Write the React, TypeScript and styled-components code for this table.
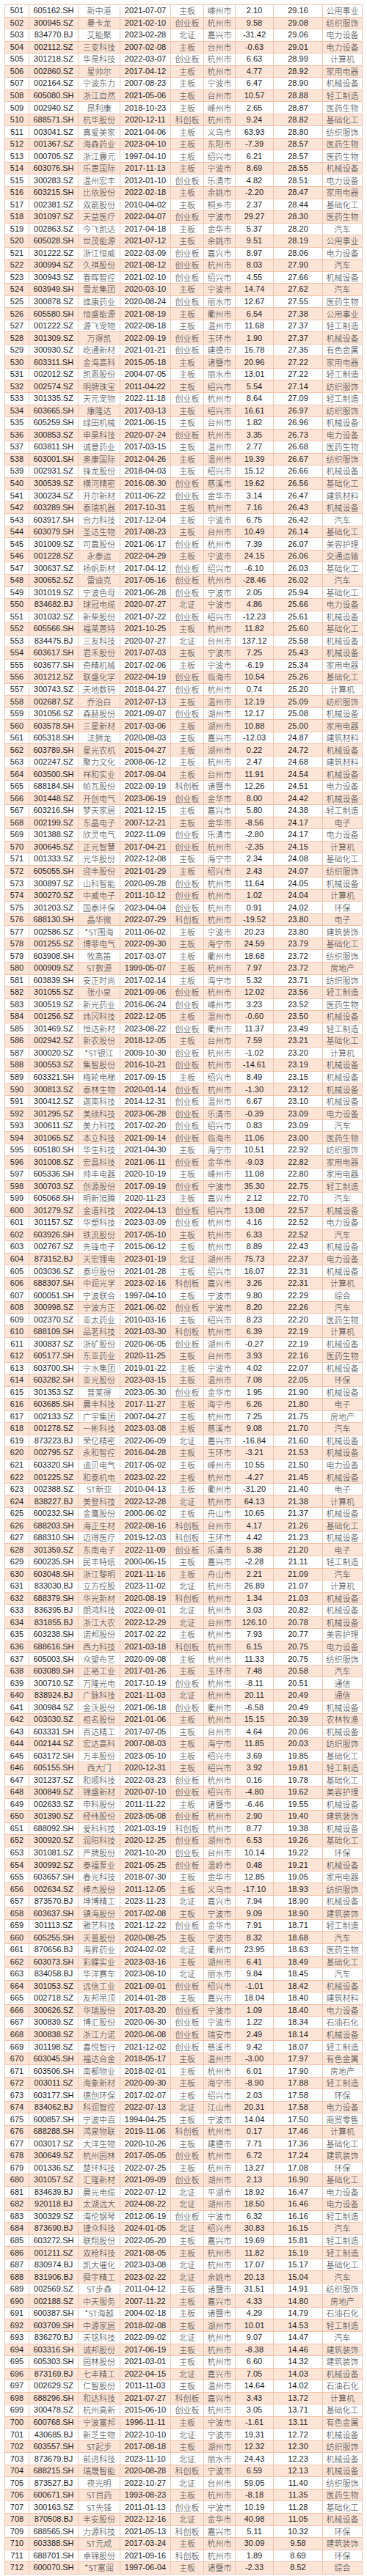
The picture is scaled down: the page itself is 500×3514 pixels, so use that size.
import React from 'react';
import styled, { createGlobalStyle } from 'styled-components';

const GlobalStyle = createGlobalStyle`
  html, body {
    margin: 0;
    padding: 0;
    background: #fff;
  }
`;

// code name date board city v1 v2 industry — row number starts at 501
const raw = `605162.SH 新中港 2021-07-07 主板 嵊州市 2.10 29.16 公用事业
300945.SZ 曼卡龙 2021-02-10 创业板 杭州市 9.58 29.08 纺织服饰
834770.BJ 艾能聚 2023-02-28 北证 嘉兴市 -31.42 29.06 电力设备
002112.SZ 三变科技 2007-02-08 主板 台州市 -0.63 29.01 电力设备
301218.SZ 华是科技 2022-03-07 创业板 杭州市 6.63 28.99 计算机
002860.SZ 星帅尔 2017-04-12 主板 杭州市 4.77 28.92 家用电器
002164.SZ 宁波东力 2007-08-23 主板 宁波市 6.47 28.90 机械设备
605080.SH 浙江自然 2021-05-06 主板 台州市 10.57 28.88 轻工制造
002940.SZ 昂利康 2018-10-23 主板 嵊州市 2.65 28.87 医药生物
688571.SH 杭华股份 2020-12-11 科创板 杭州市 9.24 28.82 基础化工
003041.SZ 真爱美家 2021-04-06 主板 义乌市 63.93 28.80 纺织服饰
001367.SZ 海森药业 2023-04-10 主板 东阳市 -7.39 28.57 医药生物
000705.SZ 浙江震元 1997-04-10 主板 绍兴市 6.21 28.57 医药生物
603076.SH 乐惠国际 2017-11-13 主板 宁波市 8.69 28.55 机械设备
300283.SZ 温州宏丰 2012-01-10 创业板 乐清市 4.82 28.51 电力设备
603215.SH 比依股份 2022-02-18 主板 余姚市 -2.20 28.47 家用电器
002381.SZ 双箭股份 2010-04-02 主板 桐乡市 2.37 28.44 基础化工
301097.SZ 天益医疗 2022-04-07 创业板 宁波市 29.27 28.30 医药生物
002863.SZ 今飞凯达 2017-04-18 主板 金华市 5.37 28.20 汽车
605028.SH 世茂能源 2021-07-12 主板 余姚市 9.51 28.19 公用事业
301222.SZ 浙江恒威 2022-03-09 创业板 嘉兴市 8.97 28.06 电力设备
300994.SZ 久祺股份 2021-08-12 创业板 杭州市 8.03 27.90 汽车
300943.SZ 春晖智控 2021-02-10 创业板 绍兴市 4.55 27.66 机械设备
603949.SH 雪龙集团 2020-03-10 主板 宁波市 14.74 27.62 汽车
300878.SZ 维康药业 2020-08-24 创业板 丽水市 12.67 27.55 医药生物
605580.SH 恒盛能源 2021-08-19 主板 衢州市 6.54 27.38 公用事业
001222.SZ 源飞宠物 2022-08-18 主板 温州市 11.68 27.37 轻工制造
301309.SZ 万得凯 2022-09-19 创业板 玉环市 1.90 27.37 机械设备
300930.SZ 屹通新材 2021-01-21 创业板 建德市 16.78 27.35 有色金属
603311.SH 金海高科 2015-05-18 主板 诸暨市 20.96 27.22 家用电器
002012.SZ 凯恩股份 2004-07-05 主板 丽水市 13.01 27.22 轻工制造
002574.SZ 明牌珠宝 2011-04-22 主板 绍兴市 5.54 27.14 纺织服饰
301335.SZ 天元宠物 2022-11-18 创业板 杭州市 8.64 27.09 轻工制造
603665.SH 康隆达 2017-03-13 主板 绍兴市 16.61 26.97 纺织服饰
605259.SH 绿田机械 2021-06-15 主板 台州市 1.82 26.96 机械设备
300853.SZ 申昊科技 2020-07-24 创业板 杭州市 3.35 26.73 电力设备
603811.SH 诚意药业 2017-03-15 主板 温州市 2.77 26.68 医药生物
603001.SH 奥康国际 2012-04-26 主板 温州市 19.39 26.67 纺织服饰
002931.SZ 锋龙股份 2018-04-03 主板 绍兴市 15.12 26.66 机械设备
300539.SZ 横河精密 2016-08-30 创业板 慈溪市 19.62 26.56 基础化工
300234.SZ 开尔新材 2011-06-22 创业板 金华市 3.14 26.47 建筑材料
603289.SH 泰瑞机器 2017-10-31 主板 杭州市 7.16 26.43 机械设备
603917.SH 合力科技 2017-12-04 主板 宁波市 6.75 26.42 汽车
603079.SH 圣达生物 2017-08-23 主板 台州市 10.49 26.14 基础化工
301009.SZ 可靠股份 2021-06-17 创业板 杭州市 7.39 26.07 美容护理
001228.SZ 永泰运 2022-04-29 主板 宁波市 24.15 26.06 交通运输
300637.SZ 扬帆新材 2017-04-12 创业板 绍兴市 -6.10 26.03 基础化工
300652.SZ 雷迪克 2017-05-16 创业板 杭州市 -28.46 26.02 汽车
301019.SZ 宁波色母 2021-06-28 创业板 宁波市 2.05 25.94 基础化工
834682.BJ 球冠电缆 2020-07-27 北证 宁波市 4.86 25.66 电力设备
301032.SZ 新柴股份 2021-07-22 创业板 绍兴市 -12.23 25.61 机械设备
605566.SH 福莱蒽特 2021-10-25 主板 杭州市 11.82 25.60 基础化工
834475.BJ 三友科技 2020-07-27 北证 台州市 137.12 25.58 机械设备
603617.SH 君禾股份 2017-07-03 主板 宁波市 7.25 25.43 机械设备
603677.SH 奇精机械 2017-02-06 主板 宁波市 -6.19 25.34 家用电器
301212.SZ 联盛化学 2022-04-19 创业板 临海市 10.54 25.26 基础化工
300743.SZ 天地数码 2018-04-27 创业板 杭州市 0.74 25.20 计算机
002687.SZ 乔治白 2012-07-13 主板 温州市 12.19 25.09 纺织服饰
301056.SZ 森赫股份 2021-09-07 创业板 湖州市 12.17 25.08 机械设备
603578.SH 三星新材 2017-03-06 主板 湖州市 10.88 25.00 家用电器
605318.SH 法狮龙 2020-08-03 主板 嘉兴市 -12.03 24.87 建筑材料
603789.SH 星光农机 2015-04-27 主板 湖州市 0.22 24.72 机械设备
002247.SZ 聚力文化 2008-06-12 主板 杭州市 2.47 24.68 建筑材料
603500.SH 祥和实业 2017-09-04 主板 台州市 11.91 24.54 机械设备
688184.SH 帕瓦股份 2022-09-19 科创板 诸暨市 12.26 24.51 电力设备
301448.SZ 开创电气 2023-06-19 创业板 金华市 8.00 24.42 机械设备
603216.SH 梦天家居 2021-12-15 主板 嘉兴市 5.80 24.38 轻工制造
002199.SZ 东晶电子 2007-12-21 主板 金华市 -8.56 24.17 电子
301388.SZ 欣灵电气 2022-11-09 创业板 乐清市 -2.80 24.17 电力设备
300645.SZ 正元智慧 2017-04-21 创业板 杭州市 -2.35 24.15 计算机
001333.SZ 光华股份 2022-12-08 主板 海宁市 2.34 24.08 基础化工
605055.SH 迎丰股份 2021-01-29 主板 绍兴市 2.43 24.07 纺织服饰
300897.SZ 山科智能 2020-09-28 创业板 杭州市 11.64 24.05 机械设备
300270.SZ 中威电子 2011-10-12 创业板 杭州市 1.02 24.04 计算机
301203.SZ 国泰环保 2023-04-04 创业板 杭州市 0.91 24.02 环保
688130.SH 晶华微 2022-07-29 科创板 杭州市 -19.52 23.80 电子
002586.SZ *ST围海 2011-06-02 主板 宁波市 20.23 23.80 建筑装饰
001255.SZ 博菲电气 2022-09-30 主板 海宁市 24.59 23.79 基础化工
603908.SH 牧高笛 2017-03-07 主板 衢州市 18.68 23.72 纺织服饰
000909.SZ ST数源 1999-05-07 主板 杭州市 7.97 23.72 房地产
603839.SH 安正时尚 2017-02-14 主板 海宁市 5.32 23.71 纺织服饰
301055.SZ 张小泉 2021-09-06 创业板 杭州市 12.02 23.56 轻工制造
300519.SZ 新光药业 2016-06-24 创业板 嵊州市 3.23 23.52 医药生物
001256.SZ 炜冈科技 2022-12-05 主板 温州市 -0.60 23.50 机械设备
301469.SZ 恒达新材 2023-08-22 创业板 衢州市 11.37 23.49 轻工制造
002942.SZ 新农股份 2018-12-05 主板 台州市 7.59 23.21 基础化工
300020.SZ *ST银江 2009-10-30 创业板 杭州市 -1.02 23.20 计算机
300553.SZ 集智股份 2016-10-21 创业板 杭州市 -14.61 23.19 机械设备
603321.SH 梅轮电梯 2017-09-15 主板 绍兴市 8.49 23.15 机械设备
300813.SZ 泰林生物 2020-01-14 创业板 杭州市 -1.30 23.12 机械设备
300412.SZ 迦南科技 2014-12-31 创业板 温州市 6.67 23.10 机械设备
301295.SZ 美硕科技 2023-06-28 创业板 乐清市 -0.39 23.09 电力设备
300611.SZ 美力科技 2017-02-20 创业板 绍兴市 0.83 23.09 汽车
301065.SZ 本立科技 2021-09-14 创业板 临海市 11.06 23.00 医药生物
605180.SH 华生科技 2021-04-30 主板 海宁市 10.51 22.92 纺织服饰
301008.SZ 宏昌科技 2021-06-11 创业板 金华市 -9.03 22.82 家用电器
605336.SH 帅丰电器 2020-10-19 主板 嵊州市 11.08 22.80 家用电器
300703.SZ 创源股份 2017-09-19 创业板 宁波市 35.30 22.75 轻工制造
605068.SH 明新旭腾 2020-11-23 主板 嘉兴市 2.12 22.70 汽车
301279.SZ 金道科技 2022-04-13 创业板 绍兴市 13.08 22.57 机械设备
301157.SZ 华塑科技 2023-03-09 创业板 杭州市 4.16 22.52 电力设备
603926.SH 铁流股份 2017-05-10 主板 杭州市 6.33 22.52 汽车
002767.SZ 先锋电子 2015-06-12 主板 杭州市 8.89 22.43 机械设备
873152.BJ 天宏锂电 2023-01-19 北证 湖州市 75.73 22.37 电力设备
003036.SZ 泰坦股份 2021-01-28 主板 绍兴市 16.07 22.31 机械设备
688307.SH 中润光学 2023-02-16 科创板 嘉兴市 3.26 22.31 计算机
600051.SH 宁波联合 1997-04-10 主板 宁波市 9.80 22.29 综合
300998.SZ 宁波方正 2021-06-02 创业板 宁波市 8.20 22.26 汽车
002370.SZ 亚太药业 2010-03-16 主板 绍兴市 8.23 22.20 医药生物
688109.SH 品茗科技 2021-03-30 科创板 杭州市 6.39 22.19 计算机
300837.SZ 浙矿股份 2020-06-05 创业板 湖州市 -0.27 22.19 机械设备
605177.SH 东亚药业 2020-11-25 主板 台州市 3.93 22.16 医药生物
603700.SH 宁水集团 2019-01-22 主板 宁波市 4.02 22.07 机械设备
603282.SH 亚光股份 2023-03-15 主板 温州市 7.08 22.05 环保
301353.SZ 普莱得 2023-05-30 创业板 金华市 1.95 21.90 机械设备
603685.SH 晨丰科技 2017-11-27 主板 海宁市 6.26 21.80 电子
002133.SZ 广宇集团 2007-04-27 主板 杭州市 7.25 21.75 房地产
001278.SZ 一彬科技 2023-03-08 主板 慈溪市 9.08 21.70 汽车
873223.BJ 荣亿精密 2022-06-09 北证 嘉兴市 -16.84 21.60 机械设备
002795.SZ 永和智控 2016-04-28 主板 玉环市 -3.21 21.53 机械设备
603320.SH 迪贝电气 2017-05-02 主板 嵊州市 10.55 21.50 电力设备
001225.SZ 和泰机电 2023-02-22 主板 杭州市 -4.27 21.45 机械设备
002388.SZ ST新亚 2010-04-13 主板 衢州市 -31.20 21.40 电子
838227.BJ 美登科技 2022-12-28 北证 杭州市 64.13 21.38 计算机
600232.SH 金鹰股份 2000-06-02 主板 舟山市 10.65 21.37 机械设备
688203.SH 海正生材 2022-08-16 科创板 台州市 4.17 21.26 基础化工
688310.SH 迈得医疗 2019-12-03 科创板 玉环市 4.42 21.23 机械设备
301359.SZ 东南电子 2022-11-09 创业板 乐清市 5.38 21.20 电子
600235.SH 民丰特纸 2000-06-15 主板 嘉兴市 -2.28 21.11 轻工制造
603048.SH 浙江黎明 2021-11-16 主板 舟山市 2.21 21.09 汽车
833030.BJ 立方控股 2023-11-02 北证 杭州市 26.89 21.07 计算机
688379.SH 华光新材 2020-08-19 科创板 杭州市 1.34 21.03 机械设备
836395.BJ 朗鸿科技 2022-09-01 北证 杭州市 3.03 20.82 机械设备
831855.BJ 浙江大农 2022-12-29 北证 台州市 126.10 20.78 机械设备
603238.SH 诺邦股份 2017-02-22 主板 杭州市 7.93 20.77 美容护理
688616.SH 西力科技 2021-03-18 科创板 杭州市 6.15 20.75 电力设备
605003.SH 众望布艺 2020-09-08 主板 杭州市 11.33 20.75 纺织服饰
603089.SH 正裕工业 2017-01-26 主板 玉环市 7.48 20.58 汽车
300710.SZ 万隆光电 2017-10-19 创业板 杭州市 -8.11 20.51 通信
838924.BJ 广脉科技 2021-11-03 北证 杭州市 20.11 20.49 通信
300984.SZ 金沃股份 2021-06-18 创业板 衢州市 -6.58 20.49 机械设备
003030.SZ 祖名股份 2021-01-06 主板 杭州市 15.15 20.39 农林牧渔
603331.SH 百达精工 2017-07-05 主板 台州市 4.64 20.06 机械设备
002144.SZ 宏达高科 2007-08-03 主板 海宁市 11.85 20.03 纺织服饰
603172.SH 万丰股份 2023-05-10 主板 绍兴市 3.69 19.85 基础化工
605155.SH 西大门 2020-12-31 主板 绍兴市 3.92 19.81 轻工制造
301237.SZ 和顺科技 2022-03-23 创业板 杭州市 0.16 19.78 基础化工
300849.SZ 锦盛新材 2020-07-10 创业板 绍兴市 -4.80 19.62 美容护理
002633.SZ 申科股份 2011-11-22 主板 诸暨市 -6.46 19.55 机械设备
301390.SZ 经纬股份 2023-05-08 创业板 杭州市 2.90 19.40 建筑装饰
688092.SH 爱科科技 2021-03-19 科创板 杭州市 8.77 19.38 机械设备
300920.SZ 润阳科技 2020-12-25 创业板 湖州市 6.53 19.26 基础化工
301081.SZ 严牌股份 2021-10-20 创业板 台州市 10.14 19.22 环保
300992.SZ 泰福泵业 2021-05-25 创业板 温岭市 0.48 19.21 机械设备
603657.SH 春光科技 2018-07-30 主板 金华市 12.85 19.05 家用电器
002634.SZ 棒杰股份 2011-12-05 主板 义乌市 -17.10 18.93 纺织服饰
873570.BJ 坤博精工 2023-11-23 北证 嘉兴市 7.94 18.90 机械设备
603637.SH 镇海股份 2017-02-08 主板 宁波市 9.09 18.90 建筑装饰
301113.SZ 雅艺科技 2021-12-22 创业板 金华市 7.91 18.71 轻工制造
605255.SH 天普股份 2020-08-25 主板 宁波市 8.32 18.68 汽车
870656.BJ 海昇药业 2024-02-02 北证 衢州市 23.95 18.63 医药生物
603073.SH 彩蝶实业 2023-03-16 主板 湖州市 6.41 18.49 基础化工
834058.BJ 华洋赛车 2023-08-10 北证 丽水市 9.84 18.45 汽车
301053.SZ 远信工业 2021-09-01 创业板 绍兴市 -1.01 18.42 机械设备
002718.SZ 友邦吊顶 2014-01-28 主板 嘉兴市 18.04 18.40 建筑材料
300626.SZ 华瑞股份 2017-03-20 创业板 宁波市 1.09 18.40 电力设备
300839.SZ 博汇股份 2020-06-30 创业板 宁波市 1.22 18.34 石油石化
300838.SZ 浙江力诺 2020-06-08 创业板 瑞安市 2.49 18.14 机械设备
301198.SZ 喜悦智行 2021-12-02 创业板 慈溪市 9.42 18.07 轻工制造
603045.SH 福达合金 2018-05-17 主板 温州市 -3.00 17.97 有色金属
603506.SH 南都物业 2018-02-01 主板 杭州市 6.01 17.90 房地产
003011.SZ 海象新材 2020-09-30 主板 海宁市 -8.90 17.88 轻工制造
603177.SH 德创环保 2017-02-07 主板 绍兴市 2.03 17.58 环保
834062.BJ 科润智控 2022-07-13 北证 江山市 20.31 17.58 电力设备
600857.SH 宁波中百 1994-04-25 主板 宁波市 14.04 17.50 商贸零售
688288.SH 鸿泉物联 2019-11-06 科创板 杭州市 0.17 17.46 计算机
003017.SZ 大洋生物 2020-10-26 主板 建德市 7.71 17.36 基础化工
300649.SZ 杭州园林 2017-05-05 创业板 杭州市 6.72 17.24 建筑装饰
001336.SZ 楚环科技 2022-07-25 主板 杭州市 13.27 17.08 环保
301057.SZ 汇隆新材 2021-09-09 创业板 湖州市 2.13 16.90 基础化工
834639.BJ 晨光电缆 2022-07-12 北证 平湖市 18.92 16.47 电力设备
920118.BJ 太湖远大 2024-08-22 北证 湖州市 18.50 16.46 电力设备
300329.SZ 海伦钢琴 2012-06-19 创业板 宁波市 6.32 16.16 轻工制造
873690.BJ 捷众科技 2024-01-05 北证 绍兴市 30.83 16.15 汽车
603272.SH 联翔股份 2022-05-20 主板 嘉兴市 19.69 15.81 轻工制造
001211.SZ 双枪科技 2021-08-05 主板 杭州市 11.82 15.19 轻工制造
830974.BJ 凯大催化 2023-03-08 北证 杭州市 17.07 15.17 基础化工
831906.BJ 舜宇精工 2023-02-22 北证 余姚市 20.13 15.04 汽车
002569.SZ ST步森 2011-04-12 主板 诸暨市 31.51 14.91 纺织服饰
002188.SZ 中天服务 2007-11-22 主板 嘉兴市 4.33 14.80 房地产
600387.SH *ST海越 2004-02-18 主板 诸暨市 4.29 14.79 石油石化
603709.SH 中源家居 2018-02-08 主板 湖州市 10.01 14.53 轻工制造
836270.BJ 天铭科技 2022-09-02 北证 杭州市 9.07 14.47 汽车
603316.SH 诚邦股份 2017-06-19 主板 杭州市 -8.38 14.46 建筑装饰
605303.SH 园林股份 2021-03-01 主板 杭州市 6.60 14.32 建筑装饰
873169.BJ 七丰精工 2022-04-15 北证 嘉兴市 7.05 14.03 机械设备
002629.SZ 仁智股份 2011-11-03 主板 温州市 14.64 14.02 石油石化
688296.SH 和达科技 2021-07-27 科创板 嘉兴市 3.43 13.72 计算机
300478.SZ 杭州高新 2015-06-10 创业板 杭州市 3.05 13.71 基础化工
600768.SH 宁波富邦 1996-11-11 主板 宁波市 -1.61 13.11 有色金属
430685.BJ 新芝生物 2022-10-10 北证 宁波市 19.31 12.72 机械设备
603557.SH ST起步 2017-08-18 主板 湖州市 12.32 12.30 纺织服饰
873679.BJ 前进科技 2023-11-10 北证 丽水市 24.43 12.23 机械设备
688215.SH 瑞晟智能 2020-08-28 科创板 宁波市 6.59 12.13 机械设备
873527.BJ 夜光明 2022-10-27 北证 台州市 59.05 11.40 纺织服饰
600671.SH ST目药 1993-08-23 主板 杭州市 -8.18 11.35 医药生物
300163.SZ ST先锋 2011-01-13 创业板 宁波市 10.19 11.28 基础化工
870508.BJ 丰安股份 2022-12-16 北证 金华市 40.98 11.05 机械设备
688565.SH 力源科技 2021-05-13 科创板 嘉兴市 5.11 10.32 环保
603388.SH ST元成 2017-03-24 主板 杭州市 30.09 9.58 建筑装饰
688701.SH 卓锦股份 2021-09-16 科创板 杭州市 1.89 8.69 环保
600070.SH *ST富润 1997-06-04 主板 诸暨市 -2.33 8.52 综合`;

const rows = raw.split('\n').map((line, i) => [String(501 + i), ...line.trim().split(' ')]);

// which columns hold chinese text
const cjkCols = [2, 4, 5, 8];

export default function App() {
  return (
    <Page>
      <GlobalStyle />
      <Table>
        {rows.map((cells, i) => (
          <Row key={cells[0]} $striped={i % 2 === 1}>
            {cells.map((c, j) => (
              <Cell key={j} $cjk={cjkCols.includes(j)}>{c}</Cell>
            ))}
          </Row>
        ))}
      </Table>
    </Page>
  );
}

const Page = styled.div`
  padding: 6px 6px 0 6px;
  width: 500px;
  height: 3514px;
  box-sizing: border-box;
  background: #fff;
`;

const Table = styled.div`
  width: 488px;
  border-top: 1px solid #f4c3aa;
  border-left: 1px solid #f4c3aa;
  box-sizing: border-box;
`;

const Row = styled.div<{ $striped: boolean }>`
  display: grid;
  grid-template-columns: 33px 67px 57px 69px 45px 43px 52px 67px 54px;
  height: 16.54px;
  box-sizing: border-box;
  border-bottom: 1px solid #f4c3aa;
  background: ${p => (p.$striped ? '#fce4d6' : '#fff')};
`;

const Cell = styled.div<{ $cjk: boolean }>`
  display: flex;
  align-items: center;
  justify-content: center;
  border-right: 1px solid #f4c3aa;
  white-space: nowrap;
  overflow: hidden;
  font-family: ${p =>
    p.$cjk
      ? '"Noto Sans CJK SC", sans-serif'
      : '"Liberation Sans", Arial, "Noto Sans CJK SC", sans-serif'};
  font-size: 11px;
  line-height: 1;
  color: ${p => (p.$cjk ? '#3a3a3a' : '#1c1c1c')};
  font-weight: ${p => (p.$cjk ? 300 : 400)};
`;
